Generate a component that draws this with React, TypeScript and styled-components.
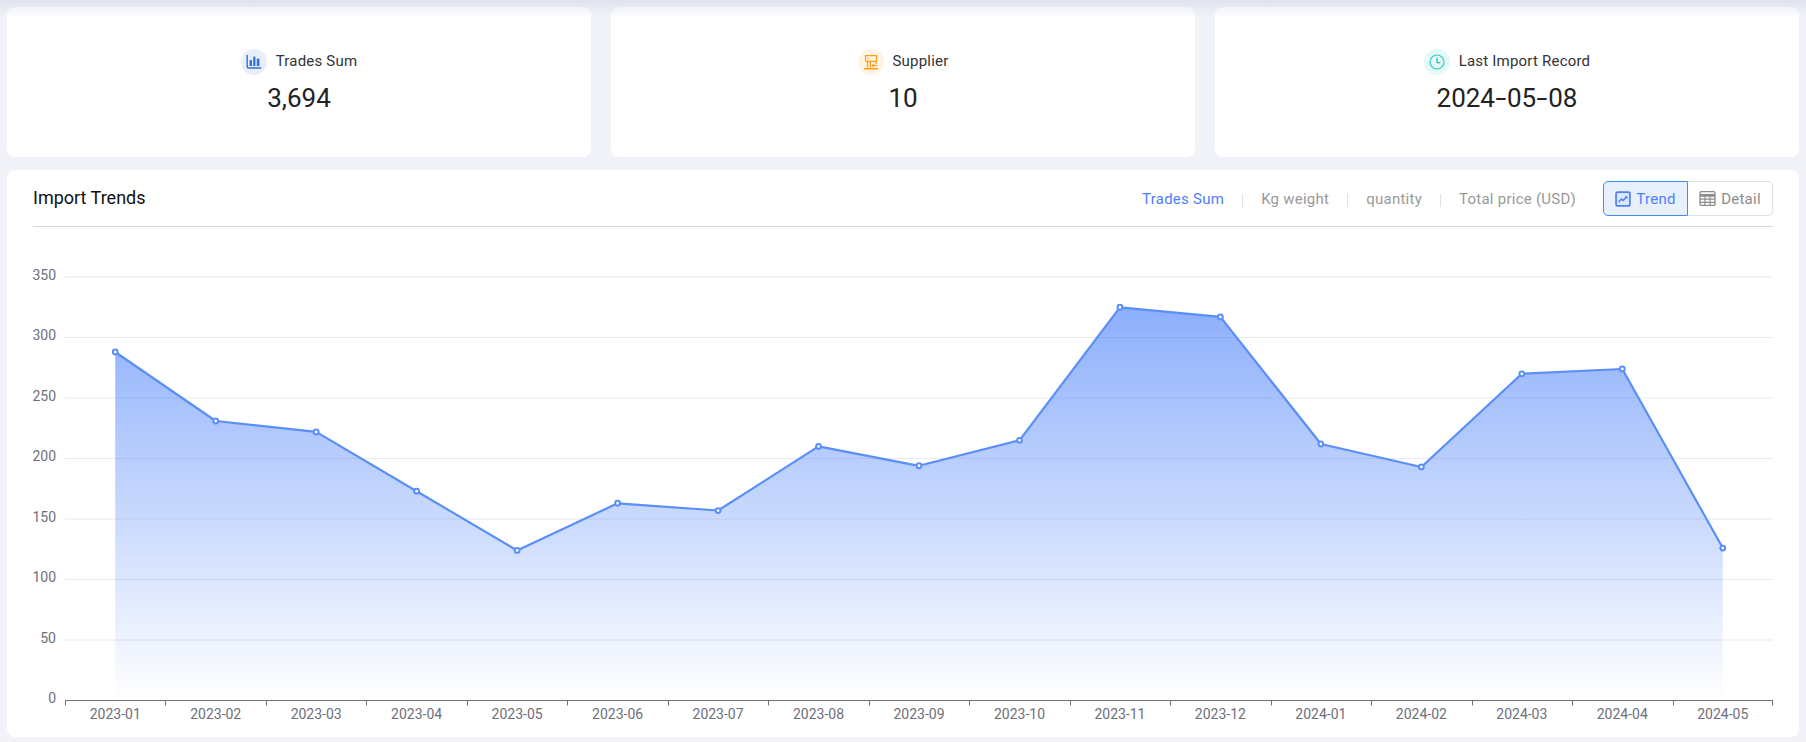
import React from "react";
import styled, { createGlobalStyle } from "styled-components";

const Global = createGlobalStyle`
  html, body { margin: 0; padding: 0; background: #f2f3f8; }
  body { font-family: Roboto, "Liberation Sans", sans-serif; }
`;

const Page = styled.div`
  position: relative;
  box-sizing: border-box;
  width: 1806px;
  height: 742px;
  padding: 7px;
  display: flex;
  flex-direction: column;
  gap: 13px;
  overflow: hidden;
`;
const TopShade = styled.div`
  position: absolute;
  left: 0;
  right: 0;
  top: 0;
  height: 18px;
  background: linear-gradient(to bottom, rgba(196, 204, 226, 0.4), rgba(196, 204, 226, 0));
  pointer-events: none;
`;
const Stats = styled.div`
  display: grid;
  grid-template-columns: repeat(3, 1fr);
  gap: 20px;
`;
const StatCard = styled.div`
  height: 150px;
  background: #fff;
  border-radius: 8px;
  display: flex;
  flex-direction: column;
  align-items: center;
  justify-content: center;
`;
const StatLabelRow = styled.div`
  display: flex;
  align-items: center;
  gap: 9px;
`;
const IconDisc = styled.span<{ $bg: string }>`
  width: 26px;
  height: 26px;
  border-radius: 50%;
  background: ${(p) => p.$bg};
  display: flex;
  align-items: center;
  justify-content: center;
`;
const StatLabel = styled.span`
  font-size: 15px;
  line-height: 24px;
  margin-top: -2px;
  letter-spacing: 0.2px;
  color: #333;
`;
const StatValue = styled.div`
  margin-top: 6px;
  font-size: 26px;
  line-height: 34px;
  color: #222;
`;
const ValueDash = styled.span`
  display: inline-block;
  width: 12px;
  text-align: center;
  transform: scaleX(1.5);
`;
const Panel = styled.section`
  flex: 1;
  background: #fff;
  border-radius: 8px;
  padding: 0 26px;
  display: flex;
  flex-direction: column;
`;
const PanelHeader = styled.header`
  height: 56px;
  border-bottom: 1px solid #d9d9dc;
  display: flex;
  align-items: center;
  justify-content: space-between;
`;
const PanelTitle = styled.h2`
  margin: -2px 0 0;
  font-size: 18px;
  font-weight: 400;
  color: #111;
`;
const Controls = styled.div`
  display: flex;
  align-items: center;
  gap: 27px;
`;
const MetricTabs = styled.div`
  display: flex;
  align-items: center;
  padding-top: 2px;
`;
const MetricTab = styled.span<{ $active?: boolean }>`
  font-size: 15px;
  letter-spacing: 0.25px;
  color: ${(p) => (p.$active ? "#4f80fb" : "#999")};
`;
const TabDivider = styled.i`
  width: 1px;
  height: 13px;
  margin: 2px 18px 0;
  background: #e2e2e2;
`;
const ViewSwitch = styled.div`
  display: flex;
  height: 35px;
`;
const ViewButton = styled.button<{ $active?: boolean; $side: "left" | "right" }>`
  box-sizing: border-box;
  width: 85px;
  height: 35px;
  padding: 1px 0 0;
  display: flex;
  align-items: center;
  justify-content: center;
  gap: 5px;
  font-family: inherit;
  font-size: 15px;
  letter-spacing: 0.25px;
  background: ${(p) => (p.$active ? "#e8f0fe" : "#fff")};
  color: ${(p) => (p.$active ? "#4f80fb" : "#8c8c8c")};
  border: 1px solid ${(p) => (p.$active ? "#3d8ff2" : "#dfdfdf")};
  border-left-width: ${(p) => (p.$side === "right" ? 0 : 1)}px;
  border-radius: ${(p) => (p.$side === "left" ? "5px 0 0 5px" : "0 5px 5px 0")};
`;
const ChartBox = styled.div`
  flex: 1;
  min-height: 0;
`;
const ChartSvg = styled.svg`
  display: block;
  font-family: Roboto, sans-serif;
`;

const months = ["2023-01","2023-02","2023-03","2023-04","2023-05","2023-06","2023-07","2023-08","2023-09","2023-10","2023-11","2023-12","2024-01","2024-02","2024-03","2024-04","2024-05"];
const values = [288,231,222,173,124,163,157,210,194,215,325,317,212,193,270,274,126];

const W = 1740;
const H = 510;
const left = 32;
const base = 473.5;
const top = 50;
const step = (W - left) / months.length;
const yOf = (v: number) => base - (v / 350) * (base - top);
const xOf = (i: number) => left + step * (i + 0.5);

function TrendChart() {
  const pts = values.map((v, i) => `${xOf(i).toFixed(1)},${yOf(v).toFixed(1)}`);
  const line = pts.join(" ");
  const area = `${xOf(0).toFixed(1)},${base} ${line} ${xOf(16).toFixed(1)},${base}`;
  return (
    <ChartSvg width={W} height={H} viewBox={`0 0 ${W} ${H}`}>
      <defs>
        <linearGradient id="areaFill" x1="0" y1="0" x2="0" y2="1">
          <stop offset="0" stopColor="#4f84fa" stopOpacity="0.65" />
          <stop offset="1" stopColor="#4f84fa" stopOpacity="0" />
        </linearGradient>
      </defs>
      {[50, 100, 150, 200, 250, 300, 350].map((v) => (
        <line key={v} x1={left} x2={W} y1={yOf(v)} y2={yOf(v)} stroke="#e6e9f3" strokeWidth="1" />
      ))}
      <polygon points={area} fill="url(#areaFill)" />
      <polyline points={line} fill="none" stroke="#5a8ef8" strokeWidth="2.2" strokeLinejoin="round" />
      {values.map((v, i) => (
        <circle key={i} cx={xOf(i)} cy={yOf(v)} r="2.4" fill="#fff" stroke="#5a8ef8" strokeWidth="2" />
      ))}
      <line x1={left} x2={W} y1={base} y2={base} stroke="#6e7079" strokeWidth="1" />
      {months.map((_, i) => (
        <line key={i} x1={Math.round(left + step * i) + 0.5} x2={Math.round(left + step * i) + 0.5} y1={base} y2={base + 5} stroke="#6e7079" strokeWidth="1" />
      ))}
      <line x1={W - 0.5} x2={W - 0.5} y1={base} y2={base + 5} stroke="#6e7079" strokeWidth="1" />
      {[0, 50, 100, 150, 200, 250, 300, 350].map((v) => (
        <text key={v} x={23} y={yOf(v) + 2.5} textAnchor="end" fontSize="14" fill="#6e7079">{v}</text>
      ))}
      {months.map((m, i) => (
        <text key={m} x={xOf(i)} y={492} textAnchor="middle" fontSize="14" fill="#6e7079">{m}</text>
      ))}
    </ChartSvg>
  );
}

const BarsIcon = () => (
  <svg width="16" height="16" viewBox="0 0 16 16" fill="none">
    <path d="M1.2 1.5v11.2c0 .8.5 1.3 1.3 1.3h12.3" stroke="#2f6fdc" strokeWidth="1.4" strokeLinecap="round" />
    <rect x="3.6" y="6" width="2.4" height="6" fill="#2f6fdc" />
    <rect x="7.2" y="2.6" width="2.2" height="9.4" fill="#2f6fdc" />
    <rect x="10.8" y="4.6" width="2.6" height="7.4" fill="#2f6fdc" />
  </svg>
);
const StoreIcon = () => (
  <svg width="16" height="17" viewBox="0 0 16 16" fill="none" stroke="#ff9f14" strokeWidth="1.2">
    <path d="M2.5 1.2h11v4.6a1 1 0 0 1-1 1h-9a1 1 0 0 1-1-1z" />
    <path d="M4.5 6.8v6.2M7.4 6.8v6.2M13 6.8v3" />
    <path d="M1 14.2h14" strokeWidth="1.6" />
    <path d="M9.2 11h5M11 9.4 9.3 11l1.7 1.6" />
    <circle cx="5" cy="4" r=".7" fill="#ff9f14" stroke="none" />
  </svg>
);
const ClockIcon = () => (
  <svg width="16" height="16" viewBox="0 0 16 16" fill="none" stroke="#22cfc8" strokeWidth="1.2">
    <circle cx="8" cy="8" r="7" />
    <path d="M8 4.2V8.6h3" strokeLinecap="round" strokeLinejoin="round" stroke="#2cb8b2" />
  </svg>
);
const TrendIcon = () => (
  <svg width="16" height="16" viewBox="0 0 15 15" fill="none">
    <rect x="1" y="1" width="13" height="13" rx="1.6" stroke="#4f80fb" strokeWidth="1.6" fill="#dbe7fe" />
    <path d="M3.4 10.4 6 7.6l1.6 1.3 3.4-3.6" stroke="#4f80fb" strokeWidth="1.4" />
    <path d="M9 4.9h2.6v2.6z" fill="#4f80fb" />
  </svg>
);
const TableIcon = () => (
  <svg width="17" height="17" viewBox="0 0 16 16" fill="none" stroke="#8c8c8c">
    <rect x="1" y="1.5" width="14" height="13" rx="1.2" strokeWidth="1.3" />
    <path d="M1 5h14" strokeWidth="2.6" />
    <path d="M1 8.6h14M1 11.6h14M5.6 5v9.5M10.4 5v9.5" strokeWidth="1.1" />
  </svg>
);

export default function App() {
  return (
    <Page>
      <Global />
      <Stats>
        <StatCard>
          <StatLabelRow>
            <IconDisc $bg="#e8eefa"><BarsIcon /></IconDisc>
            <StatLabel>Trades Sum</StatLabel>
          </StatLabelRow>
          <StatValue>3,694</StatValue>
        </StatCard>
        <StatCard>
          <StatLabelRow>
            <IconDisc $bg="#fff3e4"><StoreIcon /></IconDisc>
            <StatLabel>Supplier</StatLabel>
          </StatLabelRow>
          <StatValue>10</StatValue>
        </StatCard>
        <StatCard>
          <StatLabelRow>
            <IconDisc $bg="#e6f8f7"><ClockIcon /></IconDisc>
            <StatLabel>Last Import Record</StatLabel>
          </StatLabelRow>
          <StatValue>2024<ValueDash>-</ValueDash>05<ValueDash>-</ValueDash>08</StatValue>
        </StatCard>
      </Stats>
      <Panel>
        <PanelHeader>
          <PanelTitle>Import Trends</PanelTitle>
          <Controls>
            <MetricTabs>
              <MetricTab $active>Trades Sum</MetricTab>
              <TabDivider />
              <MetricTab>Kg weight</MetricTab>
              <TabDivider />
              <MetricTab>quantity</MetricTab>
              <TabDivider />
              <MetricTab>Total price (USD)</MetricTab>
            </MetricTabs>
            <ViewSwitch>
              <ViewButton $active $side="left"><TrendIcon />Trend</ViewButton>
              <ViewButton $side="right"><TableIcon />Detail</ViewButton>
            </ViewSwitch>
          </Controls>
        </PanelHeader>
        <ChartBox><TrendChart /></ChartBox>
      </Panel>
      <TopShade />
    </Page>
  );
}
